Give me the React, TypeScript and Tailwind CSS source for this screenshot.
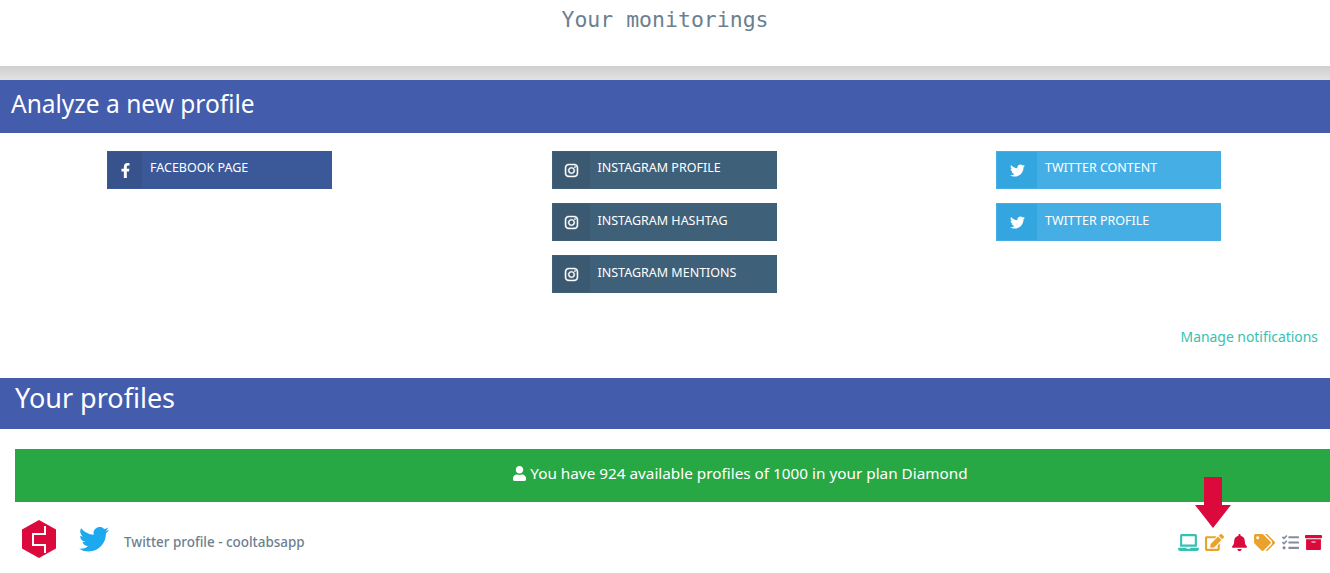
import type { ReactNode } from 'react';
import { FaArchive, FaBell, FaEdit, FaFacebookF, FaInstagram, FaLaptop, FaTags, FaTasks, FaTwitter, FaUser } from 'react-icons/fa';

type TButtonProps = {
  label: string;
  icon: ReactNode;
  className: string;
  iconClassName: string;
  labelClassName?: string;
};

const SocialButton = ({ label, icon, className, iconClassName, labelClassName = 'pt-[7px]' }: TButtonProps) => {
  return (
    <div className={`flex h-[38px] w-[225px] p-px text-white ${className}`}>
      <div className={`flex items-center justify-center text-[15px] ${iconClassName}`}>{icon}</div>
      <span className={`pl-2 text-[12.5px] leading-[18px] ${labelClassName}`}>{label}</span>
    </div>
  );
};

const Logo = () => {
  return (
    <svg width="34" height="38" viewBox="0 0 34 38" className="ml-[22px]">
      <path d="M17 0 34 9.5V28.500L17 38 0 28.500V9.500Z" fill="#dc0a3c" />
      <path d="M23 6V14H11V25H23V33" fill="none" stroke="#ffffff" strokeWidth="2" />
    </svg>
  );
};

const TwitterBird = () => {
  return (
    <svg width="30" height="25" viewBox="0 0 24 20" className="ml-[23px]">
      <path
        d="M24 2.370a9.800 9.800 0 0 1-2.830.780 4.950 4.950 0 0 0 2.170-2.730 9.860 9.860 0 0 1-3.130 1.200A4.930 4.930 0 0 0 11.800 6.100 14 14 0 0 1 1.670.950a4.930 4.930 0 0 0 1.520 6.570 4.900 4.900 0 0 1-2.230-.610v.060a4.930 4.930 0 0 0 3.950 4.830 4.950 4.950 0 0 1-2.220.080 4.930 4.930 0 0 0 4.600 3.420A9.880 9.880 0 0 1 0 17.340 14 14 0 0 0 7.550 19.550c9.060 0 14-7.500 14-14l-.010-.640A10 10 0 0 0 24 2.370Z"
        fill="#1da9ef"
      />
    </svg>
  );
};

const App = () => {
  return (
    <div className="h-[573px] overflow-hidden bg-white font-['Noto_Sans',sans-serif]">
      <header className="h-[66px] pt-[5px] text-center font-['DejaVu_Sans_Mono',monospace] text-[21.500px] leading-[30px] text-[#6c7f8f]">
        Your monitorings
      </header>
      <div className="h-[14px] bg-gradient-to-b from-[#cfcfcf] to-[#e2e2e2]" />

      <h2 className="h-[53px] bg-[#435cac] pl-[11px] text-[24.500px] leading-[47px] text-white">Analyze a new profile</h2>

      <section className="flex justify-between pt-[18px] pr-[109px] pl-[107px]">
        <div className="flex flex-col gap-[14px]">
          <SocialButton label="FACEBOOK PAGE" icon={<FaFacebookF />} className="bg-[#3b5998]" iconClassName="w-[34px] bg-[#38528b]" />
        </div>
        <div className="flex flex-col gap-[14px]">
          <SocialButton label="INSTAGRAM PROFILE" icon={<FaInstagram className="[stroke-width:14px]" />} className="bg-[#3f6079]" iconClassName="w-[37px] bg-[#3b5970]" />
          <SocialButton label="INSTAGRAM HASHTAG" icon={<FaInstagram className="[stroke-width:14px]" />} className="bg-[#3f6079]" iconClassName="w-[37px] bg-[#3b5970]" labelClassName="pt-2" />
          <SocialButton label="INSTAGRAM MENTIONS" icon={<FaInstagram className="[stroke-width:14px]" />} className="bg-[#3f6079]" iconClassName="w-[37px] bg-[#3b5970]" labelClassName="pt-2" />
        </div>
        <div className="flex flex-col gap-[14px]">
          <SocialButton label="TWITTER CONTENT" icon={<FaTwitter />} className="bg-[#45afe5]" iconClassName="w-[40px] bg-[#33a6e0]" />
          <SocialButton label="TWITTER PROFILE" icon={<FaTwitter />} className="bg-[#45afe5]" iconClassName="w-[40px] bg-[#33a6e0]" labelClassName="pt-2" />
        </div>
      </section>

      <div className="h-[85px] pt-[34px] pr-3 text-right text-[13.900px] leading-5 text-[#36c1b3]">Manage notifications</div>

      <h2 className="h-[51px] bg-[#435cac] pl-[15px] text-[27px] leading-[40px] text-white">Your profiles</h2>

      <div className="mt-5 ml-[15px] flex h-[53px] items-center justify-center gap-[3px] bg-[#28a745] pb-[5px] pl-[135px] text-[15.300px] text-white">
        <FaUser className="text-[15px]" />
        <span>You have 924 available profiles of 1000 in your plan Diamond</span>
      </div>

      <div className="relative mt-[18px] flex items-center">
        <Logo />
        <TwitterBird />
        <span className="pt-[6px] pl-[15px] text-[13.450px] font-medium text-[#6c7f8f]">Twitter profile - cooltabsapp</span>

        <div className="ml-auto flex items-center gap-[6.500px] pt-[6px] pr-2 text-[17px]">
          <FaLaptop className="text-[21px] text-[#36c1b3]" />
          <FaEdit className="text-[19px] text-[#e9a32c]" />
          <FaBell className="text-[#dc0a3c]" />
          <FaTags className="text-[21px] text-[#e9a32c]" />
          <FaTasks className="text-[#868c9c]" />
          <FaArchive className="text-[#dc0a3c]" />
        </div>

        <svg width="38" height="52" viewBox="0 0 38 52" className="absolute top-[-43px] left-[1194px]">
          <path d="M10 0H28V28H37L19 51 1 28H10Z" fill="#dc0a3c" />
        </svg>
      </div>
    </div>
  );
};

export default App;
